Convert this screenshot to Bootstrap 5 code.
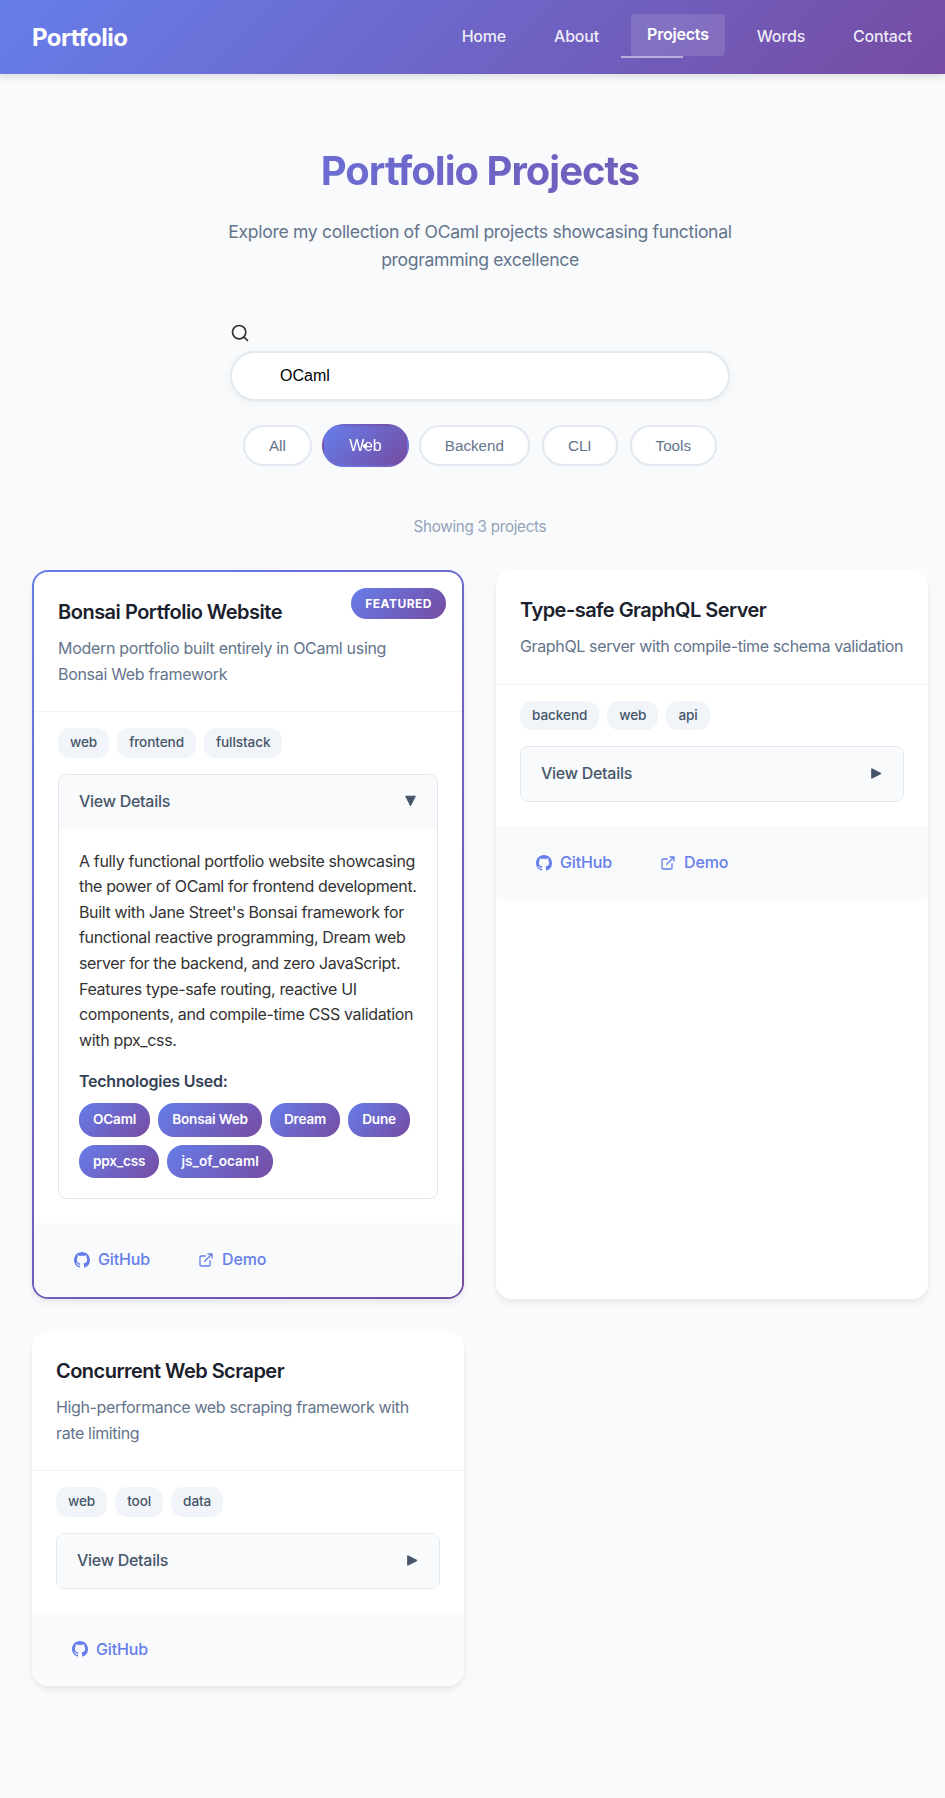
<!DOCTYPE html>
<html lang="en">
<head>
<meta charset="utf-8">
<meta name="viewport" content="width=device-width, initial-scale=1">
<title>Portfolio Projects</title>
<link href="https://cdn.jsdelivr.net/npm/bootstrap@5.3.0/dist/css/bootstrap.min.css" rel="stylesheet">
<style>
:root { --brand: linear-gradient(135deg, #667eea 0%, #764ba2 100%); }
body { font-family: Inter, "Liberation Sans", sans-serif; font-size: 16px; line-height: 1.6; color: #333; background: #f8fafc; letter-spacing: -.0208em; overflow-x: hidden; }
.topbar { height: 74px; padding: 0 17px 0 32px; background: var(--brand) 0 0 / 960px 100%; box-shadow: 0 4px 6px rgba(0,0,0,.1); }
.topbar .navbar-brand { font-size: 24px; font-weight: 700; color: #fff; letter-spacing: -.48px; padding-top: 2px; }
.topbar .nav-link { padding: 8px 16px; line-height: 25.6px; font-weight: 500; color: rgba(255,255,255,.9); border-radius: 4px; letter-spacing: -.2px; }
.topbar .nav-link.active { position: relative; top: -2px; background: rgba(255,255,255,.13); color: #fff; font-weight: 600; }
.topbar .nav-link.active::after { content: ""; position: absolute; left: -10px; bottom: -2px; width: 62px; height: 2px; background: rgba(255,255,255,.5); }
.page { padding: 64px 17px 64px 32px; }
.page-title { font-size: 40px; font-weight: 700; line-height: 64px; letter-spacing: -1px; padding-top: 1px; margin-bottom: 15px; background: var(--brand); -webkit-background-clip: text; background-clip: text; color: transparent; }
.page-intro { max-width: 600px; font-size: 17.6px; line-height: 28.16px; color: #64748b; letter-spacing: -.335px; margin-bottom: 48px; }
.search-box { width: 500px; margin-bottom: 24px; padding-top: 1px; }
.search-box svg { margin-bottom: 7.6px; }
.search-box .form-control { height: 50px; padding: 14px 48px; border: 2px solid #e2e8f0; border-radius: 25px; font: 16px "Liberation Sans", sans-serif; letter-spacing: 0; color: #000; background: #fff; box-shadow: 0 2px 8px rgba(0,0,0,.05); }
.filters { gap: 12px; margin-bottom: 48px; }
.filters .btn { height: 41px; padding: 0 24px; border: 2px solid #e2e8f0; border-radius: 20.5px; background-color: #fff; color: #64748b; font: 15.2px "Liberation Sans", sans-serif; letter-spacing: 0; }
.filters .btn.active { position: relative; background: var(--brand); border-color: transparent; color: #fff; transform: scale(1.05); }
.filters .btn.active::after { content: ""; position: absolute; left: calc(50% - 2px); top: calc(50% - 2px); width: 4px; height: 4px; border-radius: 50%; background: #fff; }
.count { font-size: 15.2px; line-height: 24px; color: #94a3b8; letter-spacing: -.28px; padding-top: 1px; margin-bottom: 31.15px; }
.projects { display: grid; grid-template-columns: 432px 432px; gap: 32px; }
.project { border: 0; border-radius: 16px; overflow: hidden; color: #333; background: #fff; box-shadow: 0 4px 6px rgba(0,0,0,.07); }
.project.featured { border: 2px solid transparent; background: linear-gradient(#fff,#fff) padding-box, var(--brand) border-box; }
.project .card-header { padding: 24px; background: none; border-bottom: 1px solid #f1f5f9; }
.project .card-title { font-size: 20px; line-height: 32px; font-weight: 600; color: #1a202c; letter-spacing: -.53px; margin-bottom: 8px; }
.project .card-title.airy { letter-spacing: -.49px; }
.project .card-text { color: #64748b; letter-spacing: -.36px; }
.project .card-text.airy { letter-spacing: -.31px; }
.project .card-body { padding: 16px 24px 24px; flex: none; }
.project .card-footer { padding: 16px 24px; border: 0; background: #f8fafc; }
.ribbon { position: absolute; top: 16px; right: 16px; padding: 6px 14px; border-radius: 20px; background: var(--brand); color: #fff; font-size: 12px; line-height: 19.2px; font-weight: 700; letter-spacing: .48px; }
.tag, .tech { display: block; border-radius: 12px; font-size: 13.6px; line-height: 21.76px; }
.tag { padding: 4px 12px; background: #f1f5f9; color: #475569; font-weight: 500; letter-spacing: -.1px; }
.tech { padding: 6px 14px; border-radius: 16px; background: var(--brand); color: #fff; font-weight: 600; letter-spacing: -.18px; }
.tech.wide { letter-spacing: .03px; }
.details { border: 1px solid #e2e8f0; border-radius: 8px; overflow: hidden; background: #fff; margin-top: 16px; }
.details summary { display: flex; justify-content: space-between; align-items: center; padding: 14px 20px; background: #f8fafc; color: #475569; font-weight: 500; letter-spacing: -.27px; list-style: none; }
.details summary svg { margin: 0 1px 1px 0; }
.details .inner { padding: 20px; }
.details p { letter-spacing: -.345px; margin-bottom: 16px; white-space: nowrap; }
.details h4 { font-size: 16px; line-height: 25.6px; font-weight: 600; color: #334155; letter-spacing: -.24px; margin-bottom: 8px; }
.act { display: flex; align-items: center; gap: 8px; padding: 8px 16px; color: #667eea; font-weight: 500; text-decoration: none; letter-spacing: -.15px; }
</style>
</head>
<body>
<svg class="d-none" xmlns="http://www.w3.org/2000/svg">
  <symbol id="github" viewBox="0 0 16 16"><path fill="currentColor" d="M8 0C3.58 0 0 3.58 0 8c0 3.54 2.29 6.53 5.47 7.59.4.07.55-.17.55-.38 0-.19-.01-.82-.01-1.49-2.01.37-2.53-.49-2.69-.94-.09-.23-.48-.94-.82-1.13-.28-.15-.68-.52-.01-.53.63-.01 1.08.58 1.23.82.72 1.21 1.87.87 2.33.66.07-.52.28-.87.51-1.07-1.78-.2-3.64-.89-3.64-3.95 0-.87.31-1.59.82-2.15-.08-.2-.36-1.02.08-2.12 0 0 .67-.21 2.2.82.64-.18 1.32-.27 2-.27s1.36.09 2 .27c1.53-1.04 2.2-.82 2.2-.82.44 1.1.16 1.92.08 2.12.51.56.82 1.27.82 2.15 0 3.07-1.87 3.75-3.65 3.95.29.25.54.73.54 1.48 0 1.07-.01 1.93-.01 2.2 0 .21.15.46.55.38A8.01 8.01 0 0 0 16 8c0-4.42-3.58-8-8-8z"/></symbol>
  <symbol id="external" viewBox="0 0 24 24"><path fill="none" stroke="currentColor" stroke-width="2" stroke-linecap="round" stroke-linejoin="round" d="M18 13v6a2 2 0 0 1-2 2H5a2 2 0 0 1-2-2V8a2 2 0 0 1 2-2h6M15 3h6v6M10 14 21 3"/></symbol>
  <symbol id="right" viewBox="0 0 11 11"><path fill="currentColor" stroke="currentColor" stroke-linejoin="round" d="M.7.7v9.6l9.4-4.8z"/></symbol>
  <symbol id="down" viewBox="0 0 11 11"><path fill="currentColor" stroke="currentColor" stroke-linejoin="round" d="M.7.7h9.6L5.5 10.3z"/></symbol>
</svg>

<nav class="topbar d-flex align-items-center justify-content-between">
  <a class="navbar-brand m-0" href="#">Portfolio</a>
  <div class="nav flex-nowrap gap-3">
    <a class="nav-link" href="#">Home</a>
    <a class="nav-link" href="#">About</a>
    <a class="nav-link active" href="#">Projects</a>
    <a class="nav-link" href="#">Words</a>
    <a class="nav-link" href="#">Contact</a>
  </div>
</nav>

<main class="page">
  <header class="text-center">
    <h1 class="page-title">Portfolio Projects</h1>
    <p class="page-intro mx-auto">Explore my collection of OCaml projects showcasing functional<br>programming excellence</p>
  </header>

  <div class="search-box mx-auto">
    <svg class="d-block" width="20" height="20" viewBox="0 0 24 24" fill="none" stroke="#333" stroke-width="2" stroke-linecap="round"><circle cx="11" cy="11" r="8"/><path d="m21 21-4.35-4.35"/></svg>
    <input class="form-control" type="text" value="OCaml" aria-label="Search projects">
  </div>

  <div class="filters d-flex justify-content-center">
    <button class="btn">All</button>
    <button class="btn active">Web</button>
    <button class="btn">Backend</button>
    <button class="btn">CLI</button>
    <button class="btn">Tools</button>
  </div>

  <p class="count text-center">Showing 3 projects</p>

  <div class="projects">
    <article class="card project featured">
      <span class="ribbon">FEATURED</span>
      <div class="card-header">
        <h3 class="card-title airy">Bonsai Portfolio Website</h3>
        <p class="card-text airy">Modern portfolio built entirely in OCaml using<br>Bonsai Web framework</p>
      </div>
      <div class="card-body">
        <div class="d-flex gap-2"><span class="tag">web</span><span class="tag">frontend</span><span class="tag">fullstack</span></div>
        <details class="details" open>
          <summary>View Details<svg width="11" height="12"><use href="#down"/></svg></summary>
          <div class="inner">
            <p>A fully functional portfolio website showcasing<br>the power of OCaml for frontend development.<br>Built with Jane Street's Bonsai framework for<br>functional reactive programming, Dream web<br>server for the backend, and zero JavaScript.<br>Features type-safe routing, reactive UI<br>components, and compile-time CSS validation<br>with ppx_css.</p>
            <h4>Technologies Used:</h4>
            <div class="d-flex flex-wrap gap-2"><span class="tech">OCaml</span><span class="tech">Bonsai Web</span><span class="tech">Dream</span><span class="tech">Dune</span><span class="tech">ppx_css</span><span class="tech wide">js_of_ocaml</span></div>
          </div>
        </details>
      </div>
      <div class="card-footer d-flex gap-3">
        <a class="act" href="#"><svg width="16" height="16"><use href="#github"/></svg>GitHub</a>
        <a class="act" href="#"><svg width="16" height="16"><use href="#external"/></svg>Demo</a>
      </div>
    </article>

    <article class="card project">
      <div class="card-header">
        <h3 class="card-title">Type-safe GraphQL Server</h3>
        <p class="card-text text-nowrap">GraphQL server with compile-time schema validation</p>
      </div>
      <div class="card-body">
        <div class="d-flex gap-2"><span class="tag">backend</span><span class="tag">web</span><span class="tag">api</span></div>
        <details class="details">
          <summary>View Details<svg width="11" height="11"><use href="#right"/></svg></summary>
        </details>
      </div>
      <div class="card-footer d-flex gap-3">
        <a class="act" href="#"><svg width="16" height="16"><use href="#github"/></svg>GitHub</a>
        <a class="act" href="#"><svg width="16" height="16"><use href="#external"/></svg>Demo</a>
      </div>
    </article>

    <article class="card project">
      <div class="card-header">
        <h3 class="card-title">Concurrent Web Scraper</h3>
        <p class="card-text">High-performance web scraping framework with<br>rate limiting</p>
      </div>
      <div class="card-body">
        <div class="d-flex gap-2"><span class="tag">web</span><span class="tag">tool</span><span class="tag">data</span></div>
        <details class="details">
          <summary>View Details<svg width="11" height="11"><use href="#right"/></svg></summary>
        </details>
      </div>
      <div class="card-footer d-flex gap-3">
        <a class="act" href="#"><svg width="16" height="16"><use href="#github"/></svg>GitHub</a>
      </div>
    </article>
  </div>
</main>
<script src="https://cdn.jsdelivr.net/npm/bootstrap@5.3.0/dist/js/bootstrap.bundle.min.js"></script>
</body>
</html>
